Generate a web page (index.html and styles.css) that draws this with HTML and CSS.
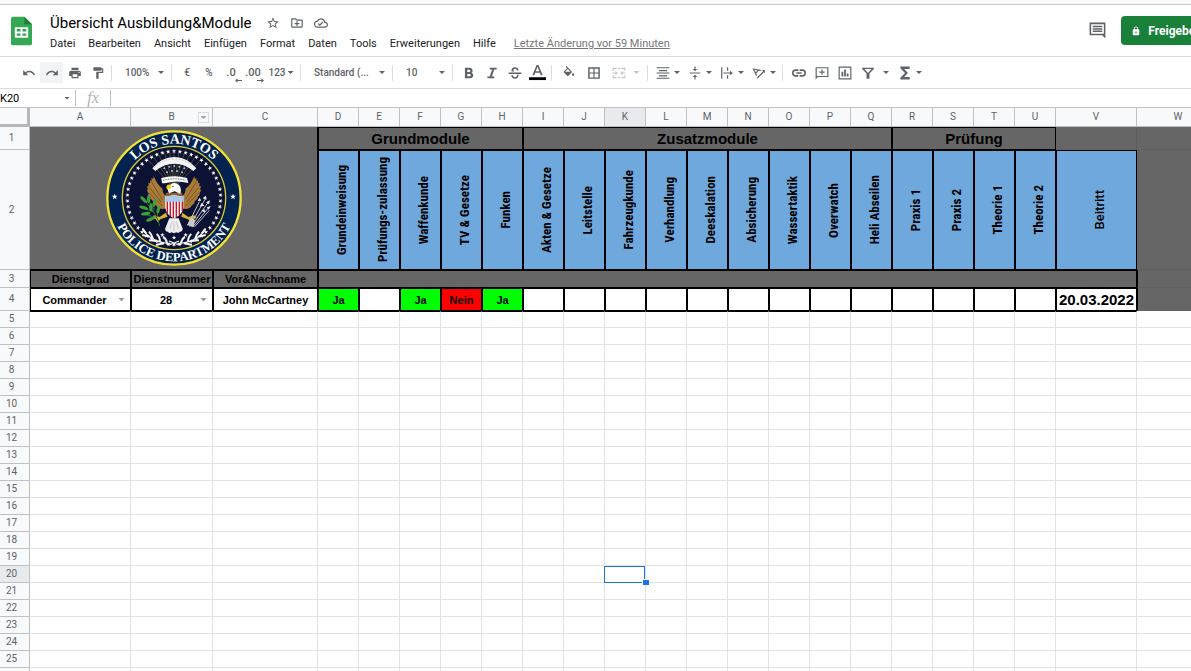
FILE: index.html
```html
<!DOCTYPE html>
<html lang="de">
<head>
    <meta charset="UTF-8">
    <meta name="viewport" content="width=device-width, initial-scale=1.0">
    <title>Übersicht Ausbildung&amp;Module</title>
    <link rel="stylesheet" href="styles.css">
</head>
<body>

    <div class="top-strip"></div>

    <!-- Kopfzeile -->
    <header class="header">
        <svg class="logo" viewBox="0 0 22 30">
            <path d="M2 0h12l8 8v20a2 2 0 0 1-2 2H2a2 2 0 0 1-2-2V2a2 2 0 0 1 2-2z" fill="#34a853"/>
            <path d="M14 0l8 8h-8z" fill="#188038"/>
            <path d="M4 11h14v11H4zM6 13v2.500h4V13zM12 13v2.500h4V13zM6 17.500V20h4v-2.500zM12 17.500V20h4v-2.500z" fill="#fff" fill-rule="evenodd"/>
        </svg>
        <div class="header-main">
            <div class="title-row">
                <h1>Übersicht Ausbildung&amp;Module</h1>
                <button class="icon-btn" aria-label="Markieren"><svg viewBox="0 0 24 24"><path d="M22 9.240l-7.190-.62L12 2 9.190 8.630 2 9.240l5.460 4.730L5.820 21 12 17.270 18.180 21l-1.630-7.030L22 9.240zM12 15.400l-3.760 2.270 1-4.280-3.320-2.880 4.380-.38L12 6.100l1.710 4.040 4.380.38-3.320 2.880 1 4.280L12 15.400z"/></svg></button>
                <button class="icon-btn" aria-label="Verschieben"><svg viewBox="0 0 24 24"><path d="M20 6h-8l-2-2H4c-1.100 0-2 .9-2 2v12c0 1.100.9 2 2 2h16c1.100 0 2-.9 2-2V8c0-1.100-.9-2-2-2zm0 12H4V6h5.200l2 2H20v10zM11 9h2v3h3v2h-3v3h-2v-3H8v-2h3z"/></svg></button>
                <button class="icon-btn" aria-label="Gespeichert"><svg viewBox="0 0 24 24"><path d="M19.350 10.040A7.490 7.490 0 0 0 12 4C9.110 4 6.600 5.640 5.350 8.040A5.994 5.994 0 0 0 0 14c0 3.310 2.690 6 6 6h13c2.760 0 5-2.240 5-5 0-2.640-2.050-4.780-4.650-4.960zM19 18H6c-2.210 0-4-1.790-4-4s1.790-4 4-4h.71C7.370 7.690 9.480 6 12 6c3.040 0 5.500 2.460 5.500 5.500v.5H19c1.660 0 3 1.340 3 3s-1.340 3-3 3zm-9-3.800l-2.100-2.100-1.400 1.400L10 17l6-6-1.400-1.400z"/></svg></button>
            </div>
            <nav class="menu">
                <button>Datei</button>
                <button>Bearbeiten</button>
                <button>Ansicht</button>
                <button>Einfügen</button>
                <button>Format</button>
                <button>Daten</button>
                <button>Tools</button>
                <button>Erweiterungen</button>
                <button>Hilfe</button>
                <a href="#">Letzte Änderung vor 59 Minuten</a>
            </nav>
        </div>
        <button class="comment-btn" aria-label="Kommentare"><svg viewBox="0 0 24 24"><path d="M22 2H2v16h16l4 4zM20 16H4V4h16zM6 6h12v2H6zM6 9h12v2H6zM6 12h12v2H6z"/></svg></button>
        <button class="share-btn">
            <svg viewBox="0 0 24 24"><path d="M18 8h-1V6A5 5 0 0 0 7 6v2H6a2 2 0 0 0-2 2v10c0 1.100.9 2 2 2h12a2 2 0 0 0 2-2V10a2 2 0 0 0-2-2zm-6 9a2 2 0 1 1 0-4 2 2 0 0 1 0 4zm3-9H9V6a3 3 0 0 1 6 0z"/></svg>
            Freigeben
        </button>
    </header>

    <!-- Werkzeugleiste -->
    <div class="toolbar">
        <button class="tool" aria-label="Rückgängig"><svg viewBox="0 0 24 24"><path d="M12.500 8c-2.650 0-5.050.99-6.900 2.600L2 7v9h9l-3.620-3.620c1.390-1.160 3.160-1.880 5.120-1.880 3.540 0 6.550 2.310 7.600 5.500l2.370-.78C21.080 11.030 17.150 8 12.500 8z"/></svg></button>
        <button class="tool active" aria-label="Wiederholen"><svg viewBox="0 0 24 24"><path d="M18.400 10.600C16.550 8.990 14.150 8 11.500 8c-4.650 0-8.580 3.030-9.960 7.220L3.900 16c1.050-3.190 4.050-5.500 7.600-5.500 1.950 0 3.730.72 5.120 1.880L13 16h9V7l-3.600 3.600z"/></svg></button>
        <button class="tool" aria-label="Drucken"><svg viewBox="0 0 24 24"><path d="M19 8H5c-1.660 0-3 1.340-3 3v6h4v4h12v-4h4v-6c0-1.660-1.340-3-3-3zm-3 11H8v-5h8v5zm3-7c-.55 0-1-.45-1-1s.45-1 1-1 1 .45 1 1-.45 1-1 1zm-1-9H6v4h12V3z"/></svg></button>
        <button class="tool" aria-label="Format übertragen"><svg viewBox="0 0 24 24"><path d="M18 4V3c0-.55-.45-1-1-1H5c-.55 0-1 .45-1 1v4c0 .55.45 1 1 1h12c.55 0 1-.45 1-1V6h1v4H9v11c0 .55.45 1 1 1h2c.55 0 1-.45 1-1v-9h8V4h-3z"/></svg></button>
        <span class="sep"></span>
        <label class="pick zoom"><select aria-label="Zoom"><option>100%</option></select><i class="caret"></i></label>
        <span class="sep"></span>
        <button class="tool num">€</button>
        <button class="tool num">%</button>
        <button class="tool num dec" aria-label="Dezimalstelle löschen">.0<svg viewBox="0 0 8 5"><path d="M8 2H3V0L0 2.500 3 5V3h5z"/></svg></button>
        <button class="tool num dec" aria-label="Dezimalstelle hinzufügen">.00<svg viewBox="0 0 8 5"><path d="M0 2h5V0l3 2.500L5 5V3H0z"/></svg></button>
        <button class="tool wide">123<i class="caret"></i></button>
        <span class="sep"></span>
        <label class="pick font"><select aria-label="Schriftart"><option>Standard (...</option></select><i class="caret"></i></label>
        <span class="sep"></span>
        <label class="pick size"><select aria-label="Schriftgröße"><option>10</option></select><i class="caret"></i></label>
        <span class="sep"></span>
        <button class="tool" aria-label="Fett"><svg viewBox="0 0 24 24"><path d="M16.500 11.500c1.100-.8 1.800-2 1.800-3.200C18.300 5.400 16.200 3 13 3H5v18h9c3 0 5.300-2.200 5.300-5 0-2-1.100-3.700-2.800-4.500zM9 6.500h3.500a1.800 1.800 0 0 1 0 3.600H9zm4 11H9v-4h4a2 2 0 0 1 0 4z"/></svg></button>
        <button class="tool" aria-label="Kursiv"><svg viewBox="0 0 24 24"><path d="M8 3v3h4.200l-4 12H4v3h12v-3h-4.200l4-12H20V3z"/></svg></button>
        <button class="tool" aria-label="Durchgestrichen"><svg viewBox="0 0 24 24"><path d="M1 11h22v2.500H1zM6.500 9.500C5 5 8 2 12 2c3.700 0 6 2 6.300 5.500h-3C15 5.800 13.800 4.800 12 4.800c-2.700 0-3.500 2.200-1.500 4.700zM15 15h3c.6 4-2 7-6 7-3.700 0-6.300-2-6.500-6h3c.3 2.200 1.500 3.200 3.500 3.200 2.600 0 3.800-1.700 3-4.200z"/></svg></button>
        <button class="tool" aria-label="Textfarbe"><svg class="text-color" viewBox="0 0 18 18"><path d="M8 1h2l4.500 11h-2.100l-1-2.700H6.600l-1 2.700H3.500zM7.200 7.600h3.600L9 3z"/><path d="M0 14h18v3H0z" fill="#000"/></svg></button>
        <span class="sep"></span>
        <button class="tool roomy" aria-label="Füllfarbe"><svg viewBox="0 0 24 24"><path d="M16.560 8.940L7.620 0 6.210 1.410l2.380 2.380-5.150 5.150c-.59.59-.59 1.540 0 2.120l5.500 5.500c.29.29.68.44 1.060.44s.77-.15 1.060-.44l5.500-5.500c.59-.58.59-1.530 0-2.120zM10 5.200L14.800 10H5.200zM19 11.500s-2 2.170-2 3.500a2 2 0 0 0 4 0c0-1.330-2-3.500-2-3.500z"/></svg></button>
        <button class="tool roomy" aria-label="Rahmen"><svg viewBox="0 0 24 24"><path d="M2 2v20h20V2zm9 17.500H4.500V13H11zm0-8.500H4.500V4.500H11zm8.500 8.500H13V13h6.500zm0-8.500H13V4.500h6.500z"/></svg></button>
        <button class="tool split off" aria-label="Zellen verbinden"><svg viewBox="0 0 24 24"><path d="M1 3h7v2H3v3H1zM10 3h4v2h-4zM16 3h7v5h-2V5h-5zM1 16h2v3h5v2H1zM10 19h4v2h-4zM21 16h2v5h-7v-2h5zM1 11h5V8l4 4-4 4v-3H1zM23 11h-5V8l-4 4 4 4v-3h5z"/></svg><i class="caret"></i></button>
        <span class="sep"></span>
        <button class="tool split" aria-label="Horizontal ausrichten"><svg viewBox="0 0 24 24"><path d="M1 2h22v2H1zM5 7h14v2H5zM1 11h22v2H1zM5 16h14v2H5zM1 20h22v2H1z"/></svg><i class="caret"></i></button>
        <button class="tool split" aria-label="Vertikal ausrichten"><svg viewBox="0 0 24 24"><path d="M3 11h18v2H3zM11 1h2v4h3l-4 4-4-4h3zM11 23h2v-4h3l-4-4-4 4h3z"/></svg><i class="caret"></i></button>
        <button class="tool split" aria-label="Textumbruch"><svg viewBox="0 0 24 24"><path d="M2 2h2v20H2zM12 2h2v6h-2zM12 16h2v6h-2zM6 11h11V8l5 4-5 4v-3H6z"/></svg><i class="caret"></i></button>
        <button class="tool split" aria-label="Textdrehung"><svg viewBox="0 0 24 24"><path d="M1 4l15 3-1.500 1.700-3-.6-4.200 4.600 1 3L7 17.500zM4 6.200l2.500 4.500 2.800-3.100zM8 20L19 9l-2-2h5v5l-1.500-1.500-11 11z"/></svg><i class="caret"></i></button>
        <span class="sep"></span>
        <button class="tool" aria-label="Link"><svg class="link" viewBox="0 0 24 24"><path d="M3.900 12c0-1.710 1.390-3.100 3.100-3.100h4V6.500H7a5.500 5.500 0 0 0 0 11h4v-2.400H7c-1.710 0-3.100-1.390-3.100-3.100zM8 13h8v-2H8v2zm9-6.500h-4v2.400h4a3.100 3.100 0 0 1 0 6.200h-4v2.400h4a5.500 5.500 0 0 0 0-11z"/></svg></button>
        <button class="tool" aria-label="Kommentar einfügen"><svg viewBox="0 0 24 24"><path d="M1 2v21l4-4h18V2zm20 15H3V4h18zM11 6h2v3.500h3.500v2H13V15h-2v-3.500H7.500v-2H11z"/></svg></button>
        <button class="tool" aria-label="Diagramm"><svg viewBox="0 0 24 24"><path d="M1 1v22h22V1zm20 20H3V3h18zM6 10h3v8H6zM10.500 6h3v12h-3zM15 13h3v5h-3z"/></svg></button>
        <button class="tool split filter" aria-label="Filter"><svg viewBox="0 0 24 24"><path d="M2 3h20v2l-7.500 8v9h-5v-9L2 5zm4 2.200L12 12l6-6.800z"/></svg><i class="caret"></i></button>
        <button class="tool split" aria-label="Funktionen"><svg viewBox="0 0 24 24"><path d="M20 1H4v3l8 8-8 8v3h16v-4H10.500L17 12l-6.500-7H20z"/></svg><i class="caret"></i></button>
    </div>

    <!-- Bearbeitungsleiste -->
    <div class="formula-bar">
        <input class="name-box" type="text" value="K20" aria-label="Namensfeld">
        <i class="caret"></i>
        <span class="fx">fx</span>
        <input class="formula" type="text" aria-label="Formel">
    </div>

    <!-- Tabelle -->
    <main class="sheet">
        <table>
            <colgroup>
                <col class="c-num"><col class="c-a"><col class="c-b"><col class="c-c">
                <col class="c-mod" span="18">
                <col class="c-v"><col class="c-w">
            </colgroup>
            <thead>
                <tr id="letters">
                    <th class="corner"></th>
                </tr>
            </thead>
            <tbody id="rows">
                <tr class="r1">
                    <th>1</th>
                    <td class="grey seal-cell" colspan="3" rowspan="2">
                        <svg class="seal" viewBox="47 15 408 408">
                            <defs>
                                <path id="arcTop" d="M88 219a163 163 0 0 1 326 0"/>
                                <path id="arcBottom" d="M61 219a190 190 0 0 0 380 0"/>
                                <path id="star" d="M0-7l1.700 4.700h5L2.700.8l1.500 4.900L0 2.800l-4.200 2.900L-2.700.8l-4-3.100h5z" fill="#fff"/>
                            </defs>
                            <circle cx="251" cy="219" r="200" fill="#02234f" stroke="#f2e235" stroke-width="7"/>
                            <circle cx="251" cy="219" r="155" fill="#0c1233" stroke="#d9cb3a" stroke-width="4"/>
                            <text class="seal-text"><textPath href="#arcTop" startOffset="50%">LOS SANTOS</textPath></text>
                            <text class="seal-text small"><textPath href="#arcBottom" startOffset="50%">POLICE DEPARTMENT</textPath></text>
                            <g id="stars"></g>
                            <use href="#star" transform="translate(73 215) scale(1.3)"/>
                            <use href="#star" transform="translate(428 215) scale(1.3)"/>
                            <!-- Strahlen und Wolken -->
                            <path d="M251 190L176 108M251 190L190 96M251 190L205 88M251 190L222 82M251 190L238 80M251 190V78M251 190L266 80M251 190L282 84M251 190L298 90M251 190L313 98M251 190L327 110" stroke="#6a6530" stroke-width="2" fill="none"/>
                            <path d="M186 130q28-34 66-34t66 34l-9 8q-26-22-57-22t-57 22z" fill="#f4f4f4"/>
                            <path d="M192 128q24-26 60-26t60 26" fill="none" stroke="#c5c8d0" stroke-width="3" stroke-dasharray="5 5"/>
                            <g fill="#b9bccb"><circle cx="222" cy="130" r="3"/><circle cx="237" cy="125" r="3"/><circle cx="252" cy="123" r="3"/><circle cx="267" cy="125" r="3"/><circle cx="282" cy="130" r="3"/><circle cx="230" cy="142" r="3"/><circle cx="245" cy="138" r="3"/><circle cx="260" cy="138" r="3"/><circle cx="275" cy="142" r="3"/></g>
                            <!-- Flügel -->
                            <path d="M239 217Q216 214 216 190Q203 183 190 153Q191 164 183 160Q187 171 178 166Q183 178 173 174Q179 186 169 184Q176 197 169 196Q178 207 173 209Q184 218 179 220Q193 231 189 234Q202 244 201 247Q214 256 229 248z" fill="#a87b39"/>
                            <path d="M265 217Q286 214 286 190Q300 183 312 153Q311 164 319 160Q315 171 324 166Q319 178 329 174Q323 186 333 184Q326 197 333 196Q324 207 329 209Q318 218 323 220Q309 231 313 234Q300 244 301 247Q288 256 273 248z" fill="#a87b39"/>
                            <path d="M183 170l33 54M177 187l36 45M178 205l38 38M318 170l-33 54M325 187l-36 45M324 205l-38 38" stroke="#684319" stroke-width="2"/>
                            <path d="M226 203h50v48l-25 35-25-35z" fill="#8b5c25"/>
                            <!-- Kopf -->
                            <path d="M236 205q-8-12 2-24q13-14 28-1q9 10 4 27l-17-8z" fill="#fff"/>
                            <path d="M244 182q-13-8-16 4l2 8 12-4z" fill="#f0d51f"/>
                            <circle cx="248" cy="184" r="2" fill="#111"/>
                            <path d="M213 159q39-10 77 0l4 15q-31-8-57-2-14 4-22 2z" fill="#fff"/>
                            <path d="M218 166q35-9 69 0" fill="none" stroke="#555" stroke-width="3" stroke-dasharray="3 2"/>
                            <!-- Schweif und Fänge -->
                            <path d="M237 280l-13 32q2 10 9 8 4 7 11 2 7 5 14 0 7 4 10-2 8 1 9-9l-12-31z" fill="#ededf0"/>
                            <path d="M239 312l6-23M251 318v-29M264 312l-6-23" stroke="#aaa" stroke-width="1.500"/>
                            <path d="M226 263l-18 13-17-5-7 7 13 5 5 9 8-9 22-8zM276 263l18 13 18-5 7 7-13 5-5 9-8-9-20-8z" fill="#d8b52c"/>
                            <!-- Schild -->
                            <path d="M225 212q13 3 26-3 13 6 28 3v37q-3 21-28 31-23-10-26-31z" fill="#fff"/>
                            <path d="M231 228v38M240 228v46M249 228v51M258 228v49M267 228v43M276 228v30" stroke="#bf1e32" stroke-width="4.500"/>
                            <path d="M225 212q13 3 26-3 13 6 28 3v18h-54z" fill="#a9c9ec"/>
                            <!-- Ölzweig -->
                            <path d="M208 303Q203 270 164 229M200 278l-39-10M191 262l-35-15M182 248l-8-33M190 258l3-34M200 276l5-31" stroke="#28782e" stroke-width="3" fill="none"/>
                            <g fill="#3fa03b"><ellipse cx="160" cy="224" rx="5" ry="13" transform="rotate(-45 160 224)"/><ellipse cx="175" cy="222" rx="5" ry="12"/><ellipse cx="193" cy="233" rx="5" ry="13" transform="rotate(20 193 233)"/><ellipse cx="160" cy="248" rx="14" ry="5" transform="rotate(18 160 248)"/><ellipse cx="166" cy="266" rx="14" ry="5" transform="rotate(-8 166 266)"/><ellipse cx="180" cy="283" rx="13" ry="5" transform="rotate(-22 180 283)"/><ellipse cx="204" cy="254" rx="5" ry="12" transform="rotate(15 204 254)"/><ellipse cx="182" cy="247" rx="5" ry="12"/></g>
                            <!-- Pfeile -->
                            <path d="M298 304l49-86M302 305l53-75M307 306l51-62M313 305l44-49M292 301l35-71" stroke="#c0c1c8" stroke-width="3"/>
                            <path d="M322 228l6-10 5 9M337 220l9-8 3 12M347 232l12-6-3 12M349 247l12-3-6 10M328 245l6-12 8 9M333 258l10-6 1 10" fill="#e8e8ec"/>
                            <path d="M290 300l12-22 12 7-4 22z" fill="#c9c9cd"/>
                            <!-- Lorbeer -->
                            <g fill="none" stroke="#f4f4f4">
                                <path d="M160 319q31 35 80 37" stroke-width="4"/>
                                <path d="M168 326q-10-14-12-15M178 335l-22-5M188 342q-4-14-12-22M200 348l-24-2M209 351q0-16-10-24M221 354l-24 6M230 355q-3-15-12-19" stroke-width="6"/>
                                <path d="M342 319q-31 35-80 37" stroke-width="4"/>
                                <path d="M334 326q10-14 12-15M324 335l22-5M314 342q4-14 12-22M302 348l24-2M293 351q0-16 10-24M281 354l24 6M272 355q3-15 12-19" stroke-width="6"/>
                                <path d="M236 360l30-12M266 360l-30-12" stroke-width="4"/>
                            </g>
                            <use href="#star" transform="translate(251 338)"/>
                            <use href="#star" transform="translate(216 330)"/>
                            <use href="#star" transform="translate(286 330)"/>
                        </svg>
                    </td>
                    <td class="grey box group" colspan="5">Grundmodule</td>
                    <td class="grey box group" colspan="9">Zusatzmodule</td>
                    <td class="grey box group" colspan="4">Prüfung</td>
                    <td class="grey dim"></td>
                    <td class="grey dim"></td>
                </tr>
                <tr class="r2">
                    <th>2</th>
                    <td class="blue box"><span>Grundeinweisung</span></td>
                    <td class="blue box"><span>Prüfungs-zulassung</span></td>
                    <td class="blue box"><span>Waffenkunde</span></td>
                    <td class="blue box"><span>TV &amp; Gesetze</span></td>
                    <td class="blue box"><span>Funken</span></td>
                    <td class="blue box"><span>Akten &amp; Gesetze</span></td>
                    <td class="blue box"><span>Leitstelle</span></td>
                    <td class="blue box"><span>Fahrzeugkunde</span></td>
                    <td class="blue box"><span>Verhandlung</span></td>
                    <td class="blue box"><span>Deeskalation</span></td>
                    <td class="blue box"><span>Absicherung</span></td>
                    <td class="blue box"><span>Wassertaktik</span></td>
                    <td class="blue box"><span>Overwatch</span></td>
                    <td class="blue box"><span>Heli Abseilen</span></td>
                    <td class="blue box"><span>Praxis 1</span></td>
                    <td class="blue box"><span>Praxis 2</span></td>
                    <td class="blue box"><span>Theorie 1</span></td>
                    <td class="blue box"><span>Theorie 2</span></td>
                    <td class="blue box joined"><span>Beitritt</span></td>
                    <td class="grey dim"></td>
                </tr>
                <tr class="r3">
                    <th>3</th>
                    <td class="grey box">Dienstgrad</td>
                    <td class="grey box">Dienstnummer</td>
                    <td class="grey box">Vor&amp;Nachname</td>
                    <td class="grey box" colspan="19"></td>
                    <td class="grey dim edge"></td>
                </tr>
                <tr class="r4">
                    <th>4</th>
                    <td class="box"><div class="choice"><span>Commander</span><button class="caret" aria-label="Dienstgrad wählen"></button></div></td>
                    <td class="box"><div class="choice"><span>28</span><button class="caret" aria-label="Dienstnummer wählen"></button></div></td>
                    <td class="box">John McCartney</td>
                    <td class="box yes">Ja</td>
                    <td class="box"></td>
                    <td class="box yes">Ja</td>
                    <td class="box no">Nein</td>
                    <td class="box yes">Ja</td>
                    <td class="box"></td><td class="box"></td><td class="box"></td>
                    <td class="box"></td><td class="box"></td><td class="box"></td>
                    <td class="box"></td><td class="box"></td><td class="box"></td>
                    <td class="box"></td><td class="box"></td><td class="box"></td>
                    <td class="box"></td>
                    <td class="box date">20.03.2022</td>
                    <td class="grey dim edge"></td>
                </tr>
            </tbody>
        </table>
    </main>

    <script>
        const letters = 'ABCDEFGHIJKLMNOPQRSTUVW'.split('');
        const activeCol = 'K';
        const activeRow = 20;
        const lastRow = 25;

        // Spaltenköpfe
        const head = document.getElementById('letters');
        letters.forEach(letter => {
            const th = document.createElement('th');
            th.textContent = letter;
            if (letter === activeCol) th.className = 'current';
            if (letter === 'B') {
                th.className = 'with-menu';
                th.innerHTML = '<span>B</span><button class="col-menu" aria-label="Spaltenmenü"><i class="caret"></i></button>';
            }
            head.appendChild(th);
        });

        // Leere Zeilen unter den Daten, die letzte ohne Nummer
        const body = document.getElementById('rows');
        for (let n = 5; n <= lastRow + 1; n++) {
            const tr = document.createElement('tr');
            const th = document.createElement('th');
            if (n <= lastRow) th.textContent = n;
            if (n === activeRow) th.className = 'current';
            tr.appendChild(th);
            letters.forEach(letter => {
                const td = document.createElement('td');
                if (n === 5 && letter !== 'W') td.className = 'under';
                if (n === activeRow && letter === activeCol) td.className = 'selected';
                tr.appendChild(td);
            });
            body.appendChild(tr);
        }

        // Sternenkranz im Siegel
        let ring = '';
        for (let i = 0; i < 50; i++) {
            ring += '<use href="#star" transform="rotate(' + (i * 7.2) + ' 251 219) translate(251 79)"/>';
        }
        document.getElementById('stars').innerHTML = ring;
    </script>

</body>
</html>
```
FILE: styles.css
```css
* {
    box-sizing: border-box;
}

body {
    margin: 0;
    height: 100vh;
    overflow: hidden;
    display: flex;
    flex-direction: column;
    font-family: Roboto, 'Liberation Sans', sans-serif;
    background-color: #fff;
    color: #202124;
}

button {
    border: none;
    background: none;
    padding: 0;
    margin: 0;
    font: inherit;
    color: inherit;
    cursor: pointer;
}

svg {
    display: block;
    fill: currentColor;
}

.top-strip {
    flex: none;
    height: 5px;
    background-color: #f8f9fa;
    border-bottom: 1px solid #c8cacd;
}

/* Kopfzeile */
.header {
    flex: none;
    display: flex;
    height: 52px;
    padding-left: 11px;
    border-bottom: 1px solid #dadce0;
    overflow: hidden;
}

.logo {
    width: 21px;
    height: 30px;
    margin-top: 11px;
}

.header-main {
    flex: 1;
    margin-left: 18px;
    padding-top: 7px;
}

.title-row {
    display: flex;
    align-items: center;
    height: 22px;
    gap: 10px;
}

h1 {
    margin: 0 4px 0 0;
    font-family: Roboto, sans-serif;
    font-size: 15px;
    font-weight: 400;
    line-height: 22px;
    color: #000;
}

.icon-btn {
    color: #5f6368;
}

.icon-btn svg {
    width: 14px;
    height: 14px;
}

.menu {
    display: flex;
    gap: 13px;
    font-size: 11px;
    line-height: 20px;
    white-space: nowrap;
}

.menu a {
    margin-left: 5px;
    color: #777;
}

.comment-btn {
    color: #5f6368;
    margin-right: 14px;
    height: 50px;
}

.comment-btn svg {
    width: 19px;
    height: 19px;
}

.share-btn {
    display: flex;
    align-items: center;
    gap: 7px;
    height: 29px;
    margin-top: 11px;
    margin-right: -25px;
    padding: 0 14px 0 10px;
    background-color: #188038;
    color: #fff;
    border-radius: 4px;
    font-size: 12px;
    font-weight: 700;
}

.share-btn svg {
    width: 10px;
    height: 10px;
}

/* Werkzeugleiste */
.toolbar {
    flex: none;
    display: flex;
    align-items: center;
    height: 32px;
    padding-left: 17px;
    border-bottom: 1px solid #dadce0;
    color: #5f6368;
    font-size: 10px;
    font-weight: 500;
}

.tool {
    flex: none;
    display: flex;
    align-items: center;
    justify-content: center;
    width: 23px;
    height: 21px;
}

.tool svg {
    width: 14px;
    height: 14px;
}

.tool.active {
    background-color: #f1f3f4;
}

.tool.off {
    color: #c4c6c8;
}

.tool .text-color {
    width: 17px;
    height: 17px;
}

.tool .link {
    width: 16px;
    height: 16px;
}

.tool.num {
    width: 22px;
}

.tool.roomy {
    width: 25px;
}

.tool.split {
    width: 32px;
    gap: 4px;
}

.tool.split.off {
    width: 39px;
    gap: 8px;
}

.tool.split.filter {
    width: 38px;
    gap: 8px;
}

.tool.dec {
    flex-direction: column;
    font-size: 11px;
    line-height: 10px;
    padding-top: 5px;
}

.tool.dec svg {
    width: 7px;
    height: 5px;
    align-self: flex-end;
}

.tool.wide {
    width: 34px;
    gap: 2px;
}

.sep {
    flex: none;
    width: 1px;
    height: 16px;
    margin: 0 4px 0 2px;
    background-color: #dadce0;
}

.caret {
    flex: none;
    width: 6px;
    height: 3px;
    background-color: currentColor;
    clip-path: polygon(0 0, 100% 0, 50% 100%);
}

.pick {
    flex: none;
    display: flex;
    align-items: center;
    justify-content: space-between;
    padding: 0 5px 0 9px;
}

.pick select {
    appearance: none;
    flex: 1;
    min-width: 0;
    border: none;
    padding: 0;
    background: none;
    font: inherit;
    color: inherit;
}

.zoom {
    width: 53px;
}

.font {
    width: 85px;
}

.size {
    width: 53px;
}

/* Bearbeitungsleiste */
.formula-bar {
    flex: none;
    display: flex;
    align-items: center;
    height: 18px;
    color: #5f6368;
}

.formula-bar input {
    border: none;
    padding: 0;
    font-family: Roboto, sans-serif;
    font-size: 11px;
    color: #000;
    background: none;
}

.formula-bar .name-box {
    width: 64px;
}

.fx {
    width: 36px;
    margin-left: 5px;
    border-left: 1px solid #c0c0c0;
    border-right: 1px solid #c0c0c0;
    text-align: center;
    font-family: 'Liberation Serif', serif;
    font-style: italic;
    font-size: 16px;
    line-height: 16px;
    color: #b0b2b5;
}

.formula {
    flex: 1;
}

/* Tabelle */
.sheet {
    flex: 1;
    min-height: 0;
    overflow: hidden;
    border-top: 1px solid #c0c0c0;
}

table {
    table-layout: fixed;
    width: 1220px;
    border-collapse: separate;
    border-spacing: 0;
}

.c-num { width: 30px; }
.c-a { width: 101px; }
.c-b { width: 82px; }
.c-c { width: 105px; }
.c-mod { width: 41px; }
.c-v { width: 81px; }
.c-w { width: 83px; }

th {
    padding: 0;
    background-color: #f8f9fa;
    border-right: 1px solid #c0c0c0;
    border-bottom: 1px solid #c0c0c0;
    font-size: 10px;
    font-weight: 400;
    line-height: 12px;
    color: #5f6368;
}

thead th {
    height: 19px;
}

tbody th {
    padding-right: 6px;
}

th.corner {
    border-right: 3px solid #b7b7b7;
    border-bottom: 3px solid #b7b7b7;
}

th.current {
    background-color: #e8eaed;
}

th.with-menu {
    position: relative;
}

.col-menu {
    position: absolute;
    right: 3px;
    top: 4px;
    width: 11px;
    height: 11px;
    display: flex;
    align-items: center;
    justify-content: center;
    border: 1px solid #dadce0;
    color: #a0a2a5;
}

td {
    height: 17px;
    padding: 0;
    border-right: 1px solid #e2e3e3;
    border-bottom: 1px solid #e2e3e3;
    font-family: 'Liberation Sans', Arial, sans-serif;
    font-size: 11px;
    font-weight: 700;
    line-height: 14px;
    text-align: center;
    white-space: nowrap;
    color: #000;
}

.r1 td { height: 23px; }
.r2 td { height: 120px; }
.r3 td { height: 18px; }
.r4 td { height: 23px; }

td.grey {
    background-color: #666;
    border-color: #666;
}

.r1 td.seal-cell {
    height: 143px;
    border-color: #000;
}

td.dim {
    border-color: #606060;
}

td.blue {
    background-color: #6fa8dc;
}

td.box {
    border: 1px solid #000;
}

td.yes {
    background-color: #0f0;
}

td.no {
    background-color: #f00;
}

td.group,
td.date {
    font-size: 15px;
}

td.edge {
    border-left: 1px solid #000;
}

td.under {
    border-top: 1px solid #000;
}

.blue span {
    display: inline-block;
    writing-mode: vertical-rl;
    transform: rotate(180deg);
    vertical-align: middle;
    margin-left: 7px;
    font-family: 'Roboto Condensed', 'Liberation Sans Narrow', Roboto, sans-serif;
    font-size: 13px;
}

.blue.joined span {
    font-family: Roboto, sans-serif;
    font-size: 13px;
    font-weight: 500;
}

.choice {
    display: flex;
    align-items: center;
    padding-right: 5px;
    color: #999;
}

.choice span {
    flex: 1;
    color: #000;
}

.choice .caret {
    width: 7px;
    height: 4px;
    background-color: currentColor;
}

/* Aktive Zelle */
td.selected {
    position: relative;
}

td.selected::before {
    content: '';
    position: absolute;
    inset: 0 0 -1px -1px;
    border: 1px solid #1a73e8;
}

td.selected::after {
    content: '';
    position: absolute;
    right: -4px;
    bottom: -3px;
    width: 6px;
    height: 5px;
    background-color: #1a73e8;
    border-left: 1px solid #fff;
    border-top: 1px solid #fff;
}

/* Siegel */
.seal {
    width: 136px;
    height: 136px;
    margin: 0 auto;
}

.seal-text {
    font-family: 'Liberation Serif', serif;
    font-size: 42px;
    font-weight: 700;
    text-anchor: middle;
    fill: #fff;
}

.seal-text.small {
    font-size: 38px;
}
```
